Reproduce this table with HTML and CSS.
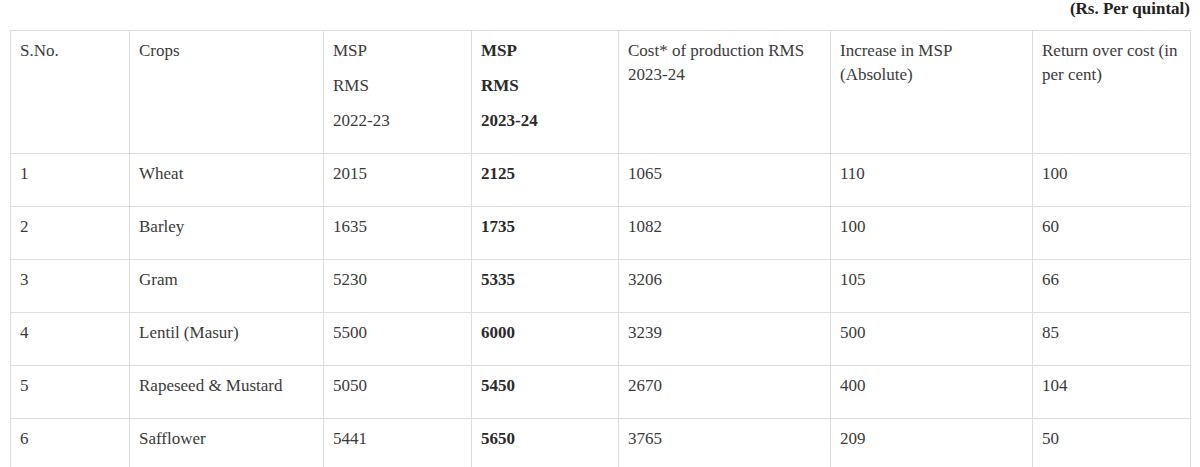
FILE: index.html
```html
<!DOCTYPE html>
<html lang="en">
<head>
<meta charset="utf-8">
<title>MSP RMS 2023-24</title>
<link rel="stylesheet" href="styles.css">
</head>
<body>
<div class="page">
  <p class="unit">(Rs. Per quintal)</p>
  <table class="msp">
    <colgroup>
      <col class="c1"><col class="c2"><col class="c3"><col class="c4"><col class="c5"><col class="c6"><col class="c7">
    </colgroup>
    <thead>
      <tr>
        <th><p>S.No.</p></th>
        <th><p>Crops</p></th>
        <th><p>MSP</p><p>RMS</p><p>2022-23</p></th>
        <th class="bold"><p>MSP</p><p>RMS</p><p>2023-24</p></th>
        <th><p>Cost* of production RMS 2023-24</p></th>
        <th><p>Increase in MSP (Absolute)</p></th>
        <th><p>Return over cost (in per cent)</p></th>
      </tr>
    </thead>
    <tbody>
      <tr><td><p>1</p></td><td><p>Wheat</p></td><td><p>2015</p></td><td class="bold"><p>2125</p></td><td><p>1065</p></td><td><p>110</p></td><td><p>100</p></td></tr>
      <tr><td><p>2</p></td><td><p>Barley</p></td><td><p>1635</p></td><td class="bold"><p>1735</p></td><td><p>1082</p></td><td><p>100</p></td><td><p>60</p></td></tr>
      <tr><td><p>3</p></td><td><p>Gram</p></td><td><p>5230</p></td><td class="bold"><p>5335</p></td><td><p>3206</p></td><td><p>105</p></td><td><p>66</p></td></tr>
      <tr><td><p>4</p></td><td><p>Lentil (Masur)</p></td><td><p>5500</p></td><td class="bold"><p>6000</p></td><td><p>3239</p></td><td><p>500</p></td><td><p>85</p></td></tr>
      <tr><td><p>5</p></td><td><p>Rapeseed &amp; Mustard</p></td><td><p>5050</p></td><td class="bold"><p>5450</p></td><td><p>2670</p></td><td><p>400</p></td><td><p>104</p></td></tr>
      <tr><td><p>6</p></td><td><p>Safflower</p></td><td><p>5441</p></td><td class="bold"><p>5650</p></td><td><p>3765</p></td><td><p>209</p></td><td><p>50</p></td></tr>
    </tbody>
  </table>
</div>
</body>
</html>
```

FILE: styles.css
```css
html, body {
  margin: 0;
  padding: 0;
  background: #ffffff;
}

body {
  font-family: "Liberation Serif", "Times New Roman", serif;
  font-size: 17px;
  color: #3a3a3a;
}

.page {
  padding: 0 10px;
}

.unit {
  margin: 0 0 13px;
  line-height: 17px;
  text-align: right;
  font-weight: bold;
  color: #222222;
}

.msp {
  width: 1180px;
  border-collapse: collapse;
  border: 1px solid #dedede;
  table-layout: fixed;
}

.c1 { width: 119px; }
.c2 { width: 194px; }
.c3 { width: 148px; }
.c4 { width: 147px; }
.c5 { width: 212px; }
.c6 { width: 202px; }
.c7 { width: 158px; }

.msp th,
.msp td {
  border: 1px solid #dedede;
  padding: 8px 9px 9px 9px;
  vertical-align: top;
  text-align: left;
  font-weight: normal;
}

.msp p {
  margin: 0 0 11px;
  line-height: 24px;
}

.msp .bold {
  font-weight: bold;
  color: #2a2a2a;
}
```
